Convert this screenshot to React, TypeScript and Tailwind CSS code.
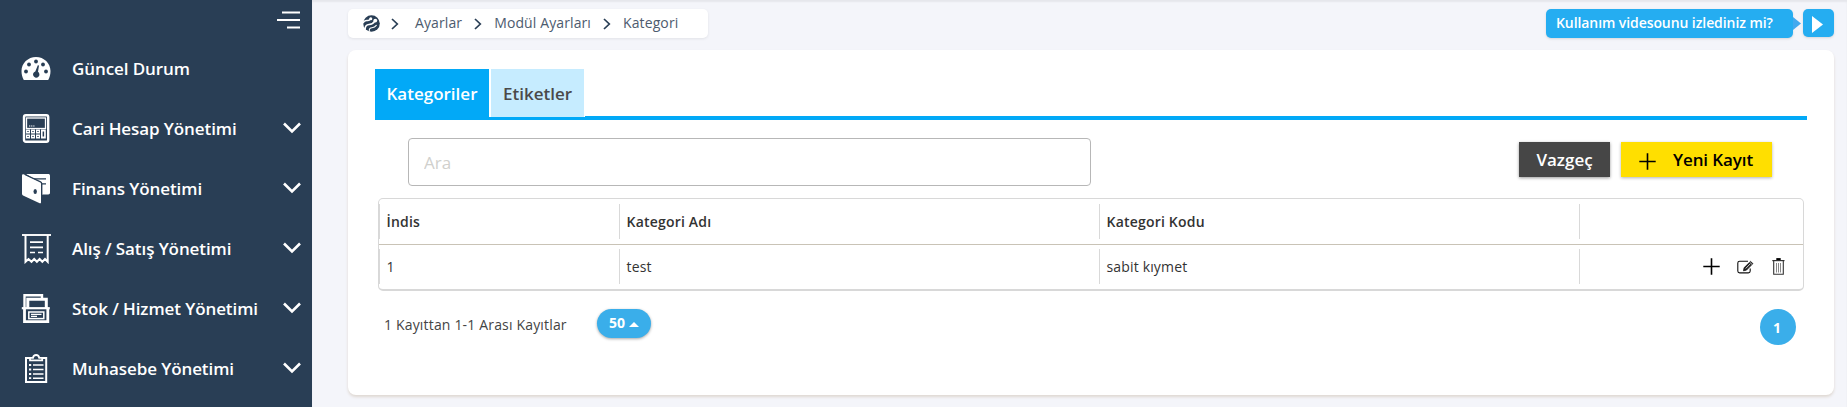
import type { ReactNode } from 'react';

type MenuItem = {
  label: string;
  icon: ReactNode;
  expandable: boolean;
};

const GaugeIcon = () => (
  <svg width="30" height="30" viewBox="0 0 30 30">
    <path d="M15 3C7 3 .5 9.300 .5 17c0 3.500 .8 6.300 2.300 9h24.400c1.500-2.700 2.300-5.500 2.300-9C29.500 9.300 23 3 15 3z" fill="#fff" />
    <g fill="#293e55">
      <circle cx="15" cy="7.500" r="1.900" />
      <circle cx="8" cy="10.500" r="1.900" />
      <circle cx="22" cy="10.500" r="1.900" />
      <circle cx="5" cy="17.500" r="1.900" />
      <circle cx="25" cy="17.500" r="1.900" />
      <path d="M16.800 11.300l1.200.3-1 6.200a3.200 3.200 0 1 1-2.700-.4z" />
    </g>
  </svg>
);

const CalculatorIcon = () => (
  <svg width="30" height="30" viewBox="0 0 30 30">
    <rect x="3" y="1.200" width="24.200" height="26.600" rx="1.800" fill="none" stroke="#fff" strokeWidth="2.400" />
    <rect x="5.500" y="4" width="19" height="10.500" fill="none" stroke="#fff" strokeWidth="1.300" />
    <path d="M8 12h6" stroke="#fff" strokeWidth="1.200" strokeDasharray="1.300 .8" />
    <g fill="#fff">
      <rect x="5" y="15.500" width="4" height="4" />
      <rect x="10" y="15.500" width="4" height="4" />
      <rect x="15" y="15.500" width="4" height="4" />
      <rect x="5" y="20.500" width="4" height="4" />
      <rect x="10" y="20.500" width="4" height="4" />
      <rect x="15" y="20.500" width="4" height="4" />
      <rect x="20" y="15.500" width="4.800" height="9" />
    </g>
    <g fill="#293e55">
      <rect x="6.300" y="17" width="1.400" height="1" />
      <rect x="11.300" y="17" width="1.400" height="1" />
      <rect x="16.300" y="17" width="1.400" height="1" />
      <rect x="6.300" y="22" width="1.400" height="1" />
      <rect x="11.300" y="22" width="1.400" height="1" />
      <rect x="16.300" y="22" width="1.400" height="1" />
      <rect x="21.600" y="17.500" width="1.500" height="5" />
    </g>
  </svg>
);

const WalletIcon = () => (
  <svg width="30" height="30" viewBox="0 0 30 30">
    <path d="M5 0h22.300c1 0 1.700.7 1.700 1.700v17c0 1-.7 1.700-1.700 1.700H21V10z" fill="#fff" />
    <path d="M12 4.800h13M18 9.800h7" stroke="#293e55" strokeWidth="1.200" />
    <path d="M1 1.500c0-1 1-1.500 2-1l15.500 7.300c1 .5 1.500 1.200 1.500 2.300v18.400c0 .8-.6 1-1.300.7L2 21.500c-.7-.4-1-.9-1-1.700z" fill="#fff" />
    <path d="M4 .5l15.500 7.400c.8.400 1.300 1 1.300 2v10.500" fill="none" stroke="#293e55" strokeWidth="1.200" />
    <ellipse cx="14.200" cy="17.500" rx="1.700" ry="2.500" fill="#293e55" />
  </svg>
);

const ReceiptIcon = () => (
  <svg width="30" height="30" viewBox="0 0 30 30" fill="none" stroke="#fff">
    <path d="M1 1h29" strokeWidth="1.900" />
    <path d="M4.500 1v26.800l3-2.800 3 2.800 2.700-2.800 2.700 2.800 2.700-2.800 2.700 2.800 2.700-2.800 2.700 2.800V1" strokeWidth="2" />
    <path d="M9 8.200h13M9 13.300h13" strokeWidth="1.700" />
    <path d="M9 18.500h5M17 18.500h5" strokeWidth="1.700" />
  </svg>
);

const StockIcon = () => (
  <svg width="30" height="30" viewBox="0 0 30 30" fill="none" stroke="#fff">
    <path d="M3.500 14V1.300H21V5" strokeWidth="2.400" />
    <path d="M6.800 14V5.300h18.500V14" strokeWidth="3" />
    <path d="M.8 14.200h28" strokeWidth="2.200" />
    <path d="M3.500 14.700v13h23.300v-13" strokeWidth="2.800" />
    <rect x="7.800" y="18" width="15" height="6.600" strokeWidth="1.500" />
    <path d="M10 20.400h10.500M10 22.400h6" strokeWidth="1.100" />
  </svg>
);

const ClipboardIcon = () => (
  <svg width="30" height="30" viewBox="0 0 30 30" fill="none" stroke="#fff">
    <rect x="5" y="4" width="20.200" height="24" strokeWidth="2" />
    <path d="M9 6.300V3.800h3c.3-2 1.300-2.800 3.100-2.800s2.800.8 3.100 2.800h3v2.500z" fill="#293e55" strokeWidth="1.800" />
    <path d="M8 11h2.200M8 15.500h2.200M8 20h2.200M8 24.200h2.200" strokeWidth="1.800" />
    <path d="M12 11h10.500M12 15.500h10.500M12 20h10.500M12 24.200h10.500" strokeWidth="1.600" />
  </svg>
);

const LogoIcon = () => (
  <svg width="17" height="17" viewBox="0 0 17 17">
    <circle cx="8.500" cy="8.500" r="8.300" fill="#293e55" />
    <g fill="none" stroke="#fff" strokeLinecap="round">
      <path d="M0 7.800C1.300 5.600 2.800 5.300 4.500 5.600c1.700.2 2.500-.9 3-2" strokeWidth="1.500" />
      <path d="M2 14.200C2.200 11 3.500 9.700 6 9.500c2.800-.2 4.200-.8 5.500-3.200" strokeWidth="1.700" />
      <path d="M6.300 16.300c-.3-2.400.8-3.300 2.700-3.500 2-.2 3.300-1 4.300-2.400" strokeWidth="1.100" />
    </g>
    <circle cx="7.800" cy="3.700" r="1.500" fill="#fff" />
    <circle cx="12.300" cy="5.600" r="1.900" fill="#fff" />
  </svg>
);

const Crumb = () => (
  <svg width="8" height="12" viewBox="0 0 8 12" fill="none" stroke="#293e55" strokeWidth="1.700">
    <path d="M1 1l5.300 5L1 11" />
  </svg>
);

const PlusIcon = ({ className }: { className?: string }) => (
  <svg className={className} width="17" height="17" viewBox="0 0 17 17" stroke="#000" strokeWidth="1.600">
    <path d="M8.500 .3v16.400M.3 8.500h16.400" />
  </svg>
);

const EditIcon = () => (
  <svg width="17" height="14" viewBox="0 0 17 14" fill="none" stroke="#111">
    <path d="M11 1.200H2.700C1.500 1.200.8 2 .8 3v8c0 1.200.8 1.900 1.900 1.900h8.600c1.200 0 1.900-.8 1.900-1.900V8.500" strokeWidth="1.100" />
    <path d="M6.500 10.800l.6-3.100L13.500 1.400l2.400 2.200-6.400 6.500z" fill="#222" strokeWidth=".8" />
    <path d="M8.700 8.500l4.500-4.600" stroke="#fff" strokeWidth=".8" />
    <path d="M12.700 2.200l2.400 2.300" stroke="#fff" strokeWidth=".7" />
  </svg>
);

const TrashIcon = () => (
  <svg width="13" height="17" viewBox="0 0 13 17" fill="none" stroke="#333">
    <path d="M4.300 1.300h4.400" stroke="#000" strokeWidth="2.400" />
    <path d="M.3 2.600h12.200" strokeWidth="1.200" />
    <path d="M1.700 3v13.300h9.600V3" strokeWidth="1.100" />
    <path d="M4.500 5v9.500M6.500 5v9.500M8.500 5v9.500" stroke="#555" strokeWidth=".7" />
  </svg>
);

const menu: MenuItem[] = [
  { label: 'Güncel Durum', icon: <GaugeIcon />, expandable: false },
  { label: 'Cari Hesap Yönetimi', icon: <CalculatorIcon />, expandable: true },
  { label: 'Finans Yönetimi', icon: <WalletIcon />, expandable: true },
  { label: 'Alış / Satış Yönetimi', icon: <ReceiptIcon />, expandable: true },
  { label: 'Stok / Hizmet Yönetimi', icon: <StockIcon />, expandable: true },
  { label: 'Muhasebe Yönetimi', icon: <ClipboardIcon />, expandable: true },
];

function Sidebar() {
  return (
    <aside className="w-[312px] shrink-0 bg-[#293e55] text-white">
      <div className="flex h-[39px] justify-end pr-3 pt-[11px]">
        <svg width="23" height="18" viewBox="0 0 23 18" stroke="#fff" strokeWidth="2">
          <path d="M5 1.500h18M0 9h23M10 16.500h13" />
        </svg>
      </div>
      {menu.map((item) => (
        <div key={item.label} className="flex h-[60px] items-center pl-[21px] pr-[11px]">
          {item.icon}
          <span className="ml-[21px] flex-1 text-[17px] font-semibold tracking-[-0.09px]">{item.label}</span>
          {item.expandable && (
            <svg className="mb-[3px]" width="18" height="12" viewBox="0 0 18 12" fill="none" stroke="#fff" strokeWidth="2.600">
              <path d="M1 1.500l8 8 8-8" />
            </svg>
          )}
        </div>
      ))}
    </aside>
  );
}

function TopBar() {
  return (
    <div className="flex h-[29px] items-start justify-between">
      <nav className="flex h-[29px] w-[360px] items-center rounded-[5px] bg-white pl-[15px] text-[14px] tracking-[0.11px] text-[#4d5b6e] shadow-[0_1px_3px_rgba(0,0,0,0.08)]">
        <LogoIcon />
        <span className="ml-[11px]"><Crumb /></span>
        <span className="ml-4 pb-[2px]">Ayarlar</span>
        <span className="ml-3"><Crumb /></span>
        <span className="ml-3 pb-[2px]">Modül Ayarları</span>
        <span className="ml-3"><Crumb /></span>
        <span className="ml-3 pb-[2px]">Kategori</span>
      </nav>
      <div className="flex items-start">
        <div className="h-[29px] w-[247px] rounded-[5px] bg-[#25adf1] pl-[10px] text-[14px] font-semibold leading-[28px] tracking-[-0.08px] text-white shadow-sm">
          Kullanım videsounu izlediniz mi?
        </div>
        <svg className="mt-2 mr-[2px]" width="8" height="13" viewBox="0 0 8 13">
          <path d="M0 0l8 6.500L0 13z" fill="#42a9ee" />
        </svg>
        <button className="flex h-7 w-[31px] items-center rounded-[5px] bg-[#25adf1] pl-[9px] pt-[2px] shadow-sm">
          <svg width="11" height="17" viewBox="0 0 11 17">
            <path d="M0 0l11 8.500L0 17z" fill="#fff" />
          </svg>
        </button>
      </div>
    </div>
  );
}

const columns = 'grid grid-cols-[240px_480px_480px_1fr]';
const cell = 'my-[5px] flex h-[35px] items-center border-l border-[#d9d9d9] pl-[6.5px]';

function CategoryTable() {
  return (
    <div className="mt-3 ml-[30px] mr-[30px] h-[93px] rounded-[5px] border border-b-2 border-[#d8d8d8] text-[14px] text-[#333]">
      <div className={`${columns} h-[46px] border-b border-[#c9c3b6] font-semibold tracking-[0.2px]`}>
        <div className={cell}>İndis</div>
        <div className={cell}>Kategori Adı</div>
        <div className={cell}>Kategori Kodu</div>
        <div className={cell} />
      </div>
      <div className={`${columns} -mt-px tracking-[0.16px]`}>
        <div className={cell}>1</div>
        <div className={cell}>test</div>
        <div className={cell}>sabit kıymet</div>
        <div className={`${cell} justify-end pr-[18px]`}>
          <PlusIcon />
          <span className="ml-[17px]"><EditIcon /></span>
          <span className="ml-[18px]"><TrashIcon /></span>
        </div>
      </div>
    </div>
  );
}

export default function App() {
  return (
    <div className="flex h-[407px] w-full overflow-hidden bg-[#f4f5fa] font-['Open_Sans',sans-serif]">
      <Sidebar />
      <main className="min-w-0 flex-1 pl-9 pr-[13px] pt-[9px] shadow-[inset_0_2px_2px_rgba(0,0,0,0.06)]">
        <TopBar />
        <section className="mt-3 h-[345px] rounded-lg bg-white pt-[19px] shadow-[0_2px_3px_#dfd8d2]">
          <div className="ml-[27px] mr-[27px] flex h-[51px] text-[17px] font-semibold">
            <div className="flex w-[114px] items-center justify-center bg-[#02a9f7] pb-px text-white">Kategoriler</div>
            <div className="flex w-24 flex-col border-b-[3px] border-[#02a9f7] pl-[2px] pr-px">
              <div className="flex h-12 items-center justify-center bg-[#c6ecff] pt-[2px] text-[#4a4a4a]">Etiketler</div>
            </div>
            <div className="flex-1 border-b-4 border-[#02a9f7]" />
          </div>

          <div className="mt-[18px] flex items-start pl-[60px] pr-[62px]">
            <input
              className="h-12 w-[683px] rounded border border-[#b7b7b7] px-[15px] text-[17px] outline-none placeholder:text-[#d0d0cd]"
              placeholder="Ara"
            />
            <button className="ml-auto mt-1 h-[35px] w-[91px] bg-[#464646] text-[17px] font-semibold text-white shadow-[0_1px_3px_rgba(0,0,0,0.4)]">
              Vazgeç
            </button>
            <button className="ml-[11px] mt-1 flex h-[35px] w-[151px] items-center bg-[#ffdf00] pl-[18px] text-[17px] font-semibold tracking-[-0.1px] text-black shadow-[0_1px_3px_rgba(0,0,0,0.3)]">
              <PlusIcon className="mt-[3px]" />
              <span className="ml-[17px]">Yeni Kayıt</span>
            </button>
          </div>

          <CategoryTable />

          <div className="mt-[18px] flex items-start pl-9 pr-[38px]">
            <span className="w-[213px] pt-[5px] text-[14px] tracking-[0.17px] text-[#444]">1 Kayıttan 1-1 Arası Kayıtlar</span>
            <button className="flex h-[29px] w-[54px] items-center rounded-full bg-[#3aaeea] pb-[2px] pl-3 text-[14px] font-bold text-white shadow-[0_1px_3px_rgba(0,0,0,0.35)]">
              50
              <svg className="ml-1 mt-1" width="10" height="5" viewBox="0 0 10 5">
                <path d="M0 5l5-5 5 5z" fill="#fff" />
              </svg>
            </button>
            <button className="ml-auto h-9 w-9 rounded-full bg-[#3aaeea] pr-[2px] text-[14px] font-bold text-white">1</button>
          </div>
        </section>
      </main>
    </div>
  );
}
